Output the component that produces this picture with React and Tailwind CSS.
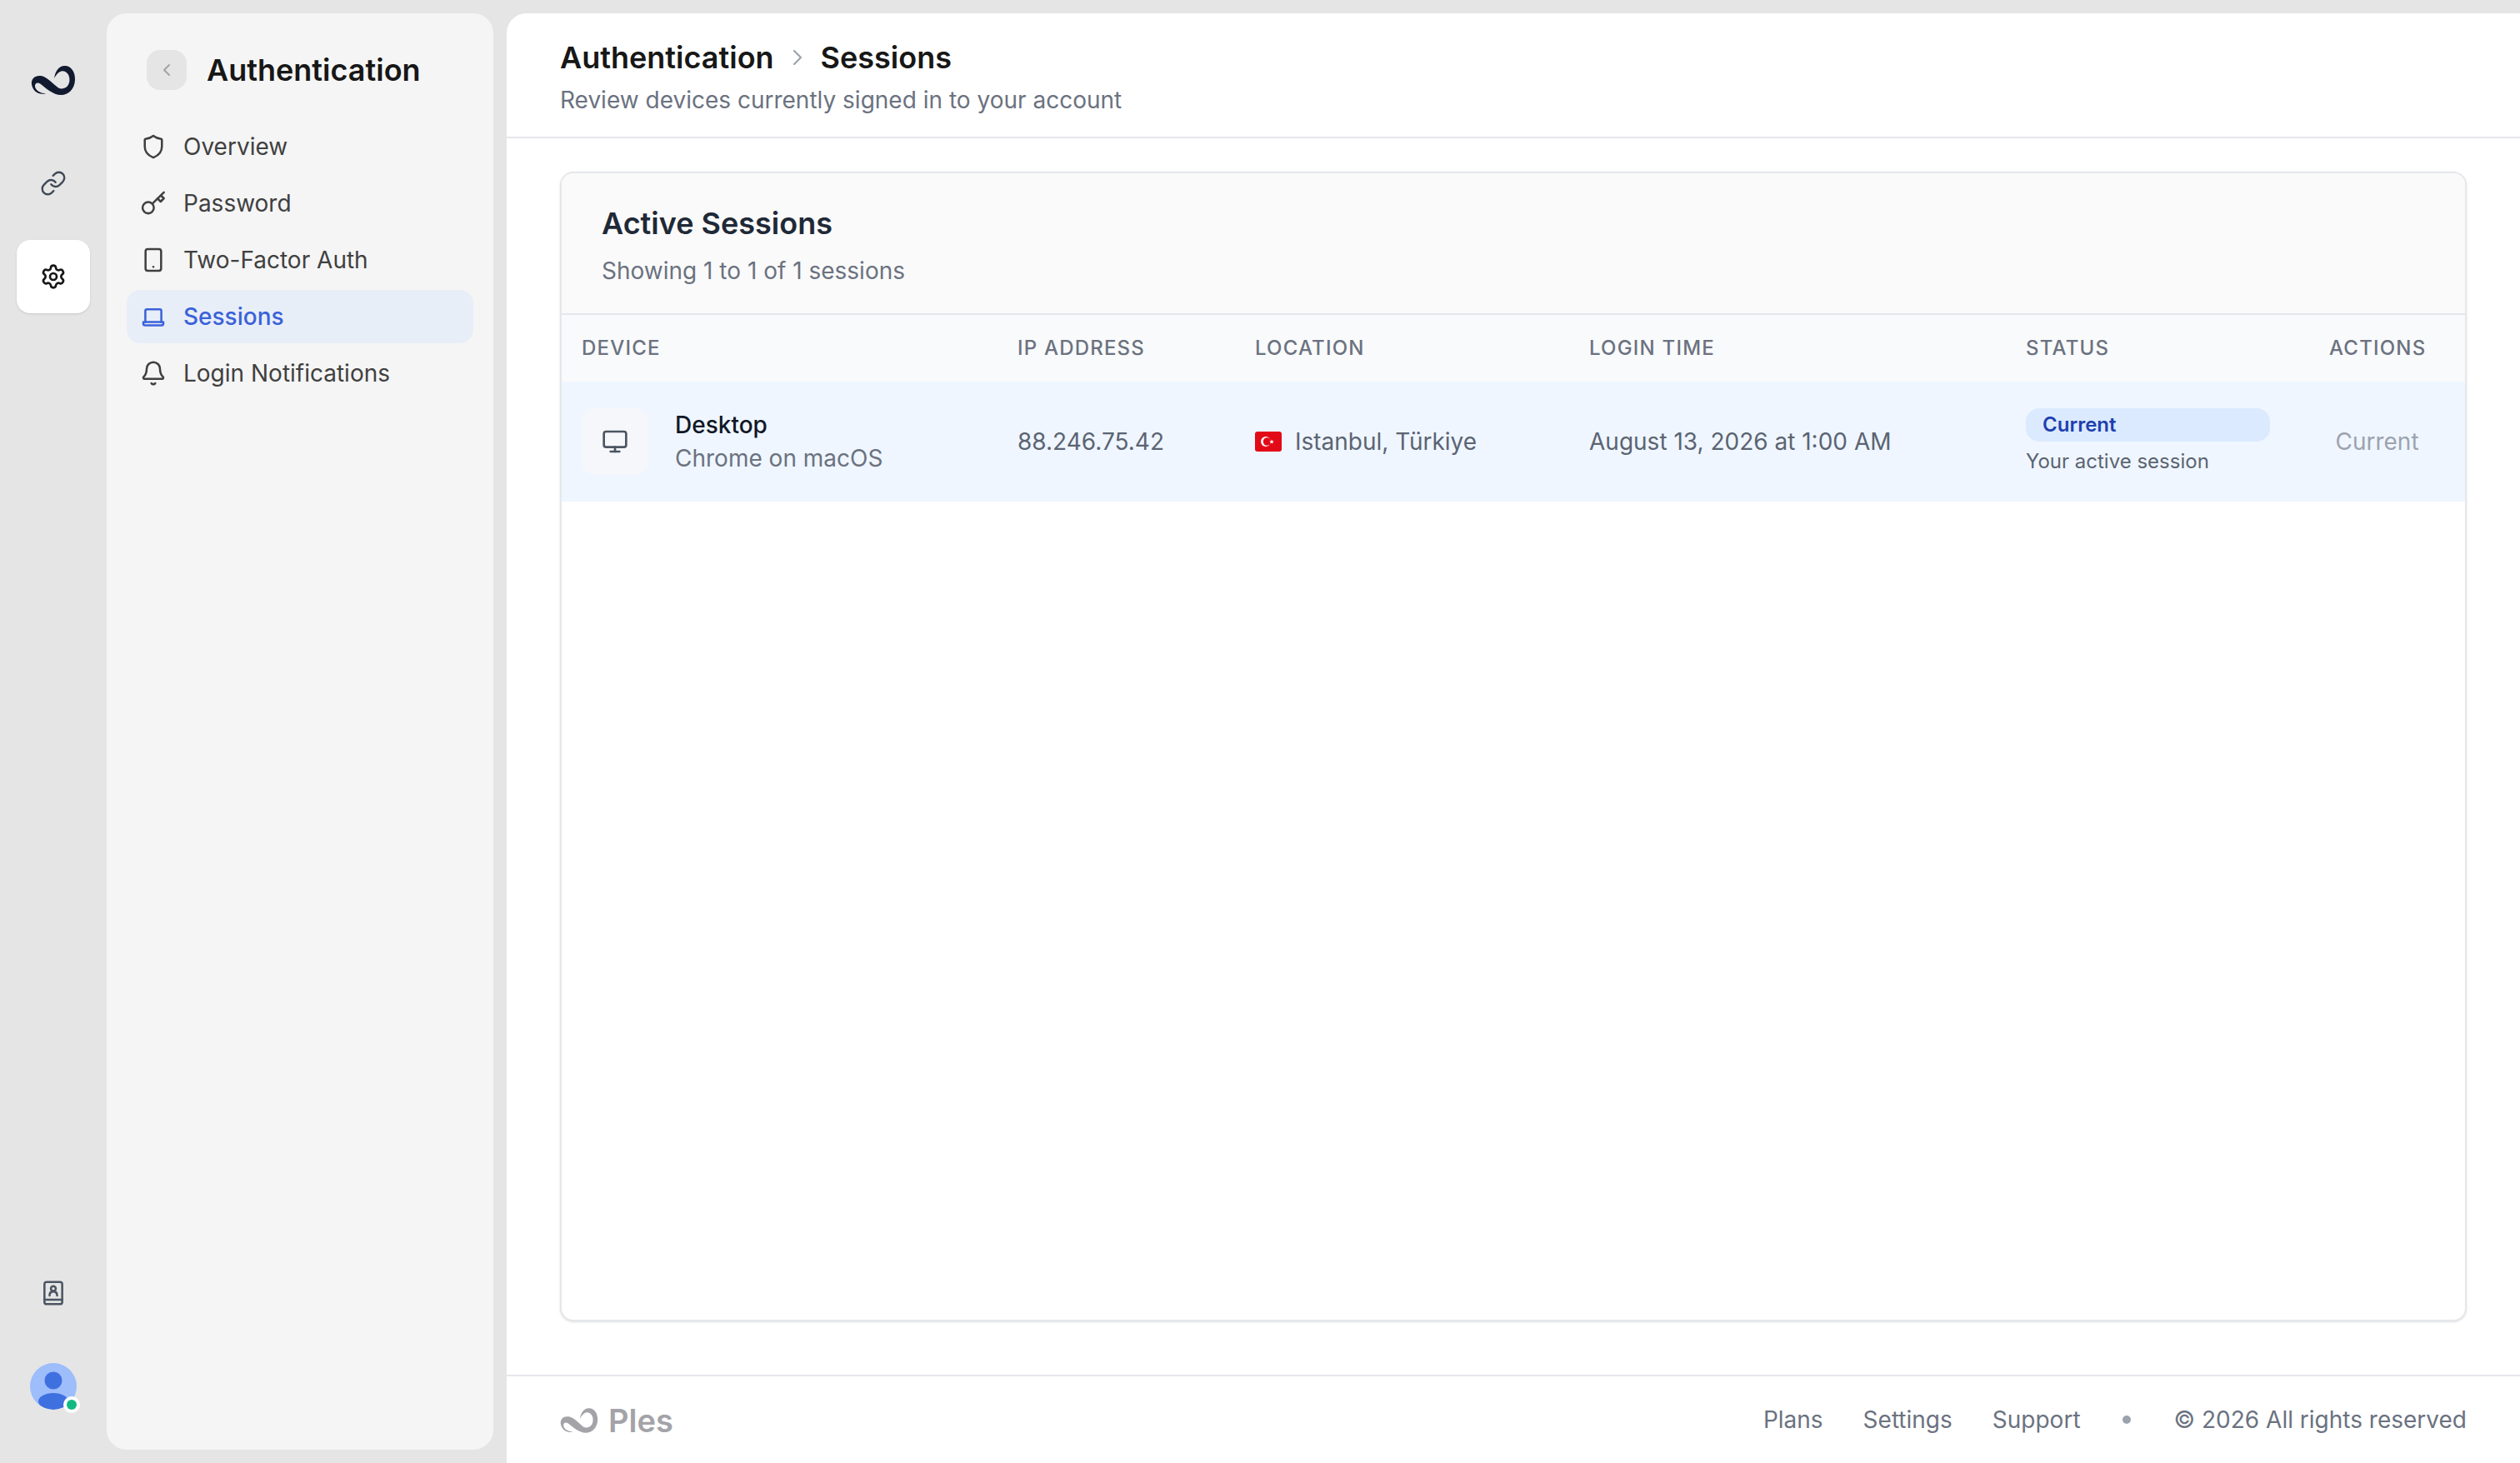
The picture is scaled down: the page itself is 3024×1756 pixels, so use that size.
import React from "react";
import { Bell, Settings, Link as LinkIcon, Monitor, ChevronLeft, ChevronRight } from "lucide-react";

const LOGO = "M140 185C115 192 92 178 88 152C85 130 102 118 122 121C145 125 165 150 185 165C200 172 222 165 225 140C228 115 210 100 195 104C185 107 175 118 170 130C172 108 185 85 208 85C232 85 246 108 245 135C244 170 220 190 195 190C165 190 140 165 120 150C110 143 100 146 100 158C100 172 118 185 140 185Z";

function Logo({ className }) {
  return (
    <svg viewBox="85 82 163 111" className={className} fill="currentColor" aria-hidden="true">
      <path d={LOGO} />
    </svg>
  );
}

function Ico({ children, className = "" }) {
  return (
    <svg viewBox="0 0 24 24" fill="none" stroke="currentColor" strokeWidth="1.9" strokeLinecap="round" strokeLinejoin="round" className={`w-8 h-8 shrink-0 ${className}`} aria-hidden="true">
      {children}
    </svg>
  );
}

const ShieldIcon = () => (
  <Ico>
    <path d="M12 2.2c2 1.6 4.4 2.6 7 2.9a.8.8 0 0 1 .7.8V12c0 5-3.4 8-7.3 9.7a1 1 0 0 1-.8 0C7.7 20 4.3 17 4.3 12V5.9a.8.8 0 0 1 .7-.8c2.6-.3 5-1.3 7-2.9z" />
  </Ico>
);
const KeyIcon = () => (
  <Ico>
    <circle cx="7.4" cy="16" r="5.1" />
    <path d="M11.2 12.3 21.5 2.2" />
    <path d="m15.8 7.7 2.8 2.8 2.9-3-2.6-2.4" />
  </Ico>
);
const TabletIcon = () => (
  <Ico>
    <rect x="5" y="2.3" width="14" height="19.4" rx="2" />
    <path d="M12 18.2h.01" />
  </Ico>
);
const LaptopIcon = () => (
  <Ico>
    <path d="M4.8 16.8V6.9a1.5 1.5 0 0 1 1.5-1.5h11.4a1.5 1.5 0 0 1 1.5 1.5v9.9" />
    <path d="M3 16.8h18v1.5a1.5 1.5 0 0 1-1.5 1.5h-15A1.5 1.5 0 0 1 3 18.3z" />
  </Ico>
);
const BookIcon = () => (
  <Ico className="text-[#4b5563]">
    <rect x="4" y="2" width="16" height="20" rx="2" />
    <path d="M4 18h16" />
    <circle cx="12" cy="8" r="2.2" />
    <path d="M8.6 14.2c0-2.2 1.4-3.6 3.4-3.6s3.4 1.4 3.4 3.6" />
  </Ico>
);

const nav = [
  { label: "Overview", icon: <ShieldIcon /> },
  { label: "Password", icon: <KeyIcon /> },
  { label: "Two-Factor Auth", icon: <TabletIcon /> },
  { label: "Sessions", icon: <LaptopIcon />, active: true },
  { label: "Login Notifications", icon: <Bell className="w-8 h-8 shrink-0" strokeWidth={1.9} /> },
];

function Rail() {
  return (
    <aside className="w-[128px] shrink-0 flex flex-col items-center pb-[64px]">
      <div className="mt-[52px] w-14 h-14 flex items-center justify-center text-[#111a2e]">
        <Logo className="w-[54px] h-[37px]" />
      </div>
      <button className="mt-[52px] w-[88px] h-[88px] flex items-center justify-center text-[#404a57]">
        <LinkIcon className="w-8 h-8" strokeWidth={1.8} />
      </button>
      <button className="mt-6 w-[88px] h-[88px] rounded-2xl bg-white shadow-sm flex items-center justify-center text-[#171717]">
        <Settings className="w-8 h-8" strokeWidth={2} />
      </button>
      <button className="mt-auto w-[88px] h-[88px] flex items-center justify-center">
        <BookIcon />
      </button>
      <div className="relative mt-10 w-14 h-14">
        <svg viewBox="0 0 56 56" className="w-14 h-14" aria-hidden="true">
          <defs>
            <clipPath id="avatar-clip"><circle cx="28" cy="28" r="28" /></clipPath>
          </defs>
          <circle cx="28" cy="28" r="28" fill="#9dbdfb" />
          <g clipPath="url(#avatar-clip)" fill="#3f70e0">
            <circle cx="28" cy="21" r="10.5" />
            <ellipse cx="28" cy="46" rx="18" ry="10" />
          </g>
        </svg>
        <span className="absolute left-[40px] top-[40px] w-5 h-5 rounded-full bg-white flex items-center justify-center">
          <span className="w-3 h-3 rounded-full bg-[#10b981]" />
        </span>
      </div>
    </aside>
  );
}

function Panel() {
  return (
    <aside className="w-[464px] shrink-0 mb-4 mr-4 rounded-[24px] bg-[#f5f5f5] pt-[44px] px-6">
      <div className="flex items-center gap-6 pl-6 h-12">
        <button className="w-12 h-12 rounded-2xl bg-[#e5e5e5] flex items-center justify-center text-[#a3a3a3]">
          <ChevronLeft className="w-6 h-6" strokeWidth={2} />
        </button>
        <h2 className="text-[36px] leading-10 font-semibold text-[#171717]">Authentication</h2>
      </div>
      <nav className="mt-9 flex flex-col gap-1">
        {nav.map((n) => (
          <a key={n.label} className={`h-16 rounded-2xl pl-4 flex items-center gap-5 text-[28px] leading-10 ${n.active ? "bg-[#e8eef8] text-[#3b62d9] font-medium" : "text-[#404040]"}`}>
            {n.icon}
            <span>{n.label}</span>
          </a>
        ))}
      </nav>
    </aside>
  );
}

const columns = ["Device", "IP Address", "Location", "Login Time", "Status", "Actions"];

function SessionsTable() {
  return (
    <table className="w-full table-fixed border-collapse">
      <colgroup>
        <col className="w-[523px]" />
        <col className="w-[285px]" />
        <col className="w-[401px]" />
        <col className="w-[524px]" />
        <col className="w-[364px]" />
        <col />
      </colgroup>
      <thead>
        <tr className="h-20 bg-[#f9fafb]">
          {columns.map((c, i) => (
            <th key={c} className={`pl-6 text-[24px] leading-8 font-medium uppercase tracking-[0.05em] text-[#6b7280] ${i === 5 ? "pr-12 text-center" : "text-left"}`}>{c}</th>
          ))}
        </tr>
      </thead>
      <tbody>
        <tr className="h-[144px] bg-[#eff6ff] text-[28px] leading-10 text-[#5b6472]">
          <td className="pl-6">
            <div className="flex items-center gap-8">
              <div className="w-20 h-20 rounded-2xl bg-[#f6f7fa] flex items-center justify-center text-[#4b5563]">
                <Monitor className="w-8 h-8" strokeWidth={2} />
              </div>
              <div>
                <div className="font-medium text-[#111827]">Desktop</div>
                <div className="text-[#6b7280]">Chrome on macOS</div>
              </div>
            </div>
          </td>
          <td className="pl-6">88.246.75.42</td>
          <td className="pl-6">
            <div className="flex items-center gap-4">
              <svg viewBox="0 0 32 24" className="w-8 h-6 shrink-0" aria-hidden="true">
                <rect width="32" height="24" rx="3" fill="#e30a17" />
                <circle cx="13" cy="12" r="6" fill="#fff" />
                <circle cx="14.6" cy="12" r="4.8" fill="#e30a17" />
                <path d="m20 9.6.8 1.7 1.8.2-1.3 1.2.4 1.8-1.7-.9-1.6.9.3-1.8-1.3-1.2 1.9-.2z" fill="#fff" />
              </svg>
              <span>Istanbul, Türkiye</span>
            </div>
          </td>
          <td className="pl-6">August 13, 2026 at 1:00 AM</td>
          <td className="pl-6">
            <div className="w-[293px] h-10 rounded-2xl bg-[#dbeafe] px-5 flex items-center text-[24px] leading-8 font-semibold text-[#1e40af]">Current</div>
            <div className="mt-2 text-[24px] leading-8 text-[#5b6472]">Your active session</div>
          </td>
          <td className="pl-6 pr-12 text-center text-[#9ca3af]">Current</td>
        </tr>
      </tbody>
    </table>
  );
}

function Main() {
  return (
    <main className="flex-1 min-w-0 flex flex-col bg-white rounded-tl-[24px]">
      <header className="h-[150px] shrink-0 border-b-2 border-[#e5e7eb] pl-16 pt-[33px]">
        <div className="flex items-center h-10 text-[36px] leading-10 font-semibold text-[#171717]">
          <span>Authentication</span>
          <ChevronRight className="w-8 h-8 mx-3 text-[#9ca3af]" strokeWidth={1.6} />
          <span>Sessions</span>
        </div>
        <p className="mt-[11px] text-[28px] leading-10 text-[#6b7280]">Review devices currently signed in to your account</p>
      </header>
      <div className="flex-1 min-h-0 px-16 pt-10 pb-16 flex">
        <section className="flex-1 rounded-2xl border-2 border-[#e5e7eb] shadow-sm overflow-hidden bg-white">
          <div className="h-[170px] border-b-2 border-[#e5e7eb] bg-[#fafafa] pl-12 pt-[38px]">
            <h1 className="text-[36px] leading-[44px] font-semibold text-[#1f2937]">Active Sessions</h1>
            <p className="mt-[15px] text-[28px] leading-10 text-[#6b7280]">Showing 1 to 1 of 1 sessions</p>
          </div>
          <SessionsTable />
        </section>
      </div>
      <footer className="h-[106px] shrink-0 border-t-2 border-[#e5e7eb] px-16 flex items-center justify-between">
        <div className="flex items-center gap-3 pt-[2px] text-[#a3a3a8]">
          <Logo className="w-[46px] h-[32px]" />
          <span className="text-[38px] leading-10 font-semibold">Ples</span>
        </div>
        <div className="flex items-center gap-12 text-[28px] leading-10 text-[#6b7280]">
          <a>Plans</a>
          <a>Settings</a>
          <a>Support</a>
          <span className="w-2.5 h-2.5 ml-[2px] mr-1 rounded-full bg-[#9ca3af]" />
          <span>© 2026 All rights reserved</span>
        </div>
      </footer>
    </main>
  );
}

export default function App() {
  return (
    <div className="h-screen overflow-hidden flex pt-4 bg-[#e5e5e5] [font-family:Inter,sans-serif]">
      <Rail />
      <Panel />
      <Main />
    </div>
  );
}
